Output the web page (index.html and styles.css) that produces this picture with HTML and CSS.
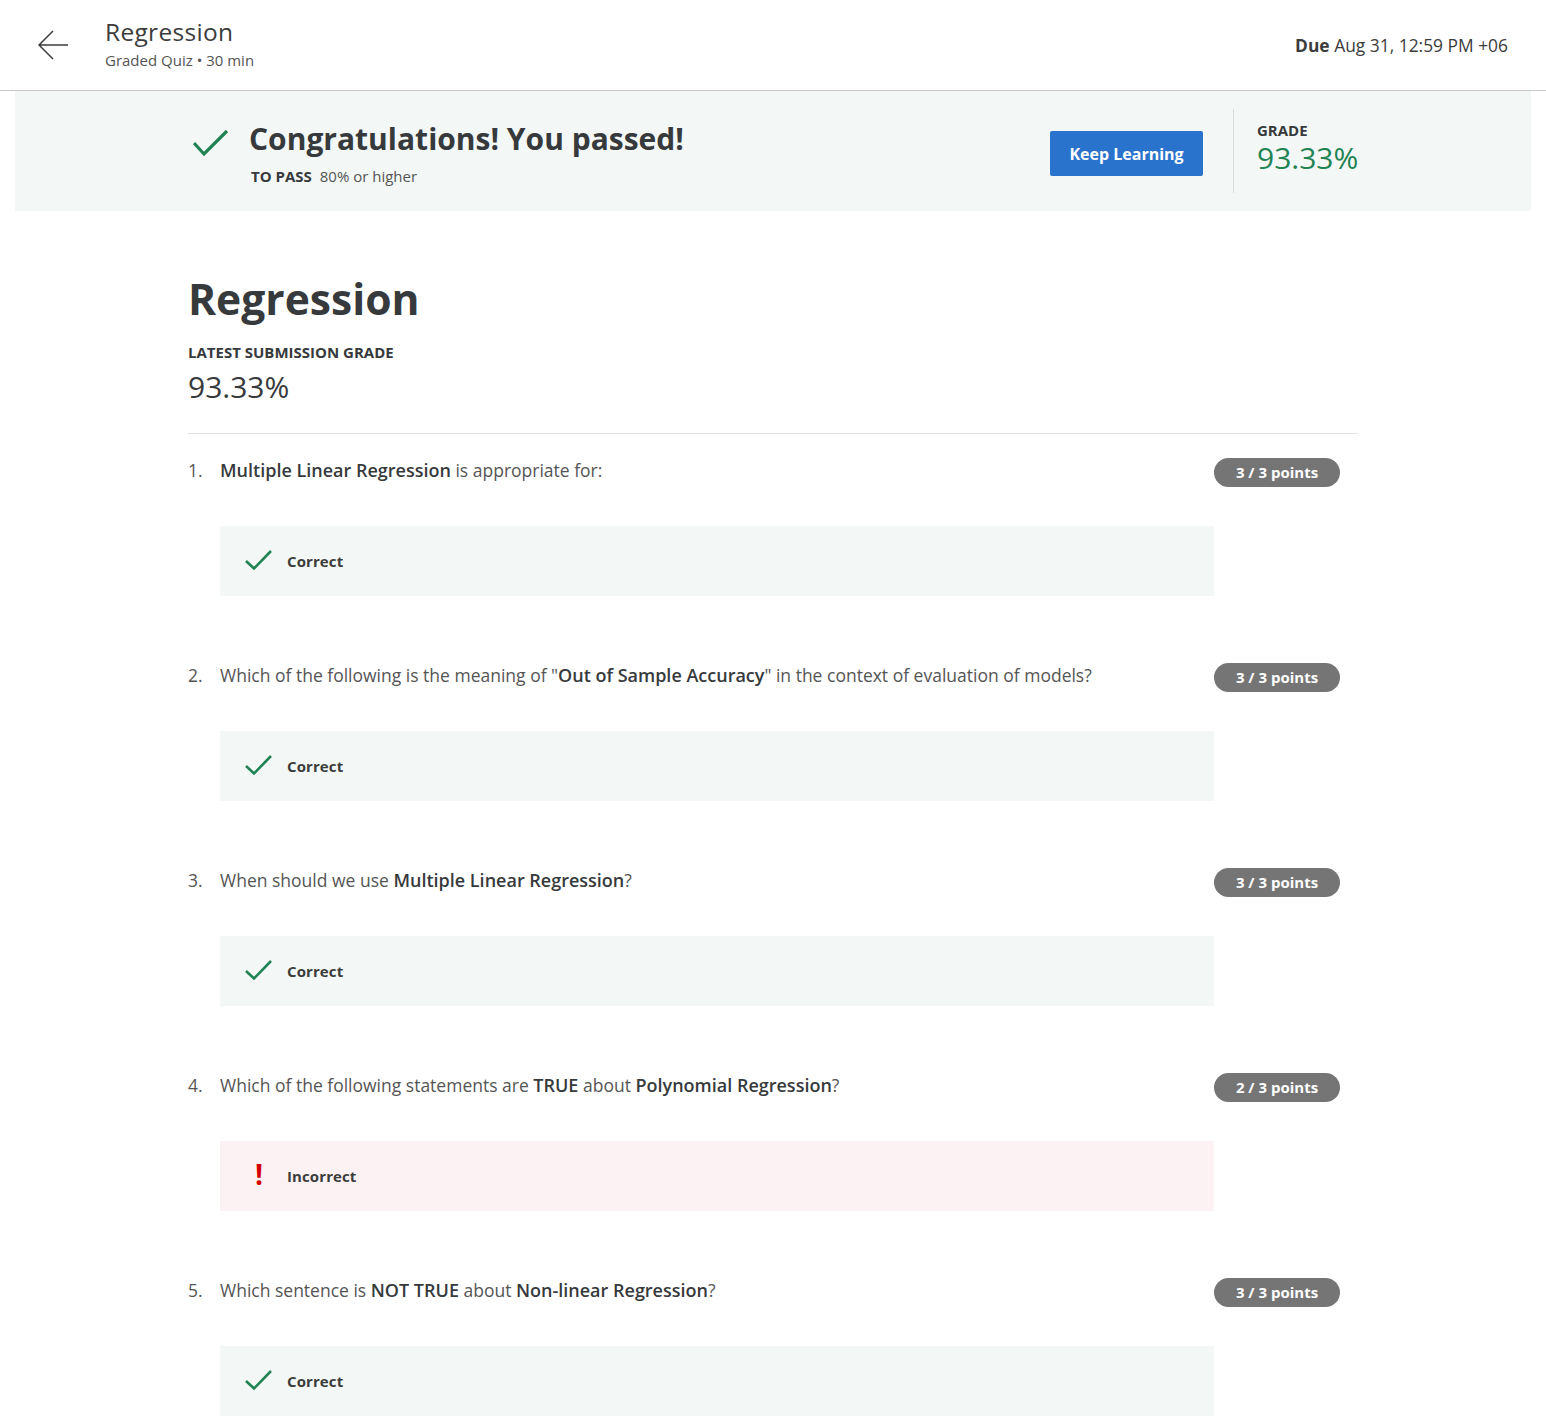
FILE: index.html
```html
<!DOCTYPE html>
<html>
<head>
<meta charset="utf-8">
<link rel="stylesheet" href="styles.css">
</head>
<body>
<header class="topbar">
  <div class="topbar-left">
    <svg class="back" width="30" height="30" viewBox="0 0 30 30"><path d="M15 1 L1 15 L15 29 M1 15 L30 15" fill="none" stroke="#3c3c3c" stroke-width="1.5"/></svg>
    <div class="titles">
      <div class="title">Regression</div>
      <div class="subtitle">Graded Quiz • 30 min</div>
    </div>
  </div>
  <div class="due"><b>Due</b> Aug 31, 12:59 PM +06</div>
</header>

<section class="banner">
  <div class="banner-inner">
    <div class="pass">
      <svg class="pass-check" width="36" height="30" viewBox="0 0 36 30"><path d="M1 14 L11 25 L34 2" fill="none" stroke="#1f8354" stroke-width="3.2"/></svg>
      <div class="pass-text">
        <div class="pass-title">Congratulations! You passed!</div>
        <div class="pass-sub"><b>TO PASS</b> 80% or higher</div>
      </div>
    </div>
    <div class="banner-right">
      <button class="keep">Keep Learning</button>
      <div class="grade">
        <div class="grade-label">GRADE</div>
        <div class="grade-value">93.33%</div>
      </div>
    </div>
  </div>
</section>

<main class="content">
  <h1 class="heading">Regression</h1>
  <div class="latest-label">LATEST SUBMISSION GRADE</div>
  <div class="latest-value">93.33%</div>
  <hr class="divider">

  <div class="question">
    <div class="q-row">
      <div class="q-num">1.</div>
      <div class="q-text"><b>Multiple Linear Regression</b> is appropriate for:</div>
      <div class="badge">3 / 3 points</div>
    </div>
    <div class="answer correct">
      <svg class="ans-check" width="28" height="22" viewBox="0 0 28 22"><path d="M1 12 L9 19.5 L26 2" fill="none" stroke="#1f8354" stroke-width="2.6"/></svg>
      <span>Correct</span>
    </div>
  </div>

  <div class="question">
    <div class="q-row">
      <div class="q-num">2.</div>
      <div class="q-text">Which of the following is the meaning of "<b>Out of Sample Accuracy</b>" in the context of evaluation of models?</div>
      <div class="badge">3 / 3 points</div>
    </div>
    <div class="answer correct">
      <svg class="ans-check" width="28" height="22" viewBox="0 0 28 22"><path d="M1 12 L9 19.5 L26 2" fill="none" stroke="#1f8354" stroke-width="2.6"/></svg>
      <span>Correct</span>
    </div>
  </div>

  <div class="question">
    <div class="q-row">
      <div class="q-num">3.</div>
      <div class="q-text">When should we use <b>Multiple Linear Regression</b>?</div>
      <div class="badge">3 / 3 points</div>
    </div>
    <div class="answer correct">
      <svg class="ans-check" width="28" height="22" viewBox="0 0 28 22"><path d="M1 12 L9 19.5 L26 2" fill="none" stroke="#1f8354" stroke-width="2.6"/></svg>
      <span>Correct</span>
    </div>
  </div>

  <div class="question">
    <div class="q-row">
      <div class="q-num">4.</div>
      <div class="q-text">Which of the following statements are <b>TRUE</b> about <b>Polynomial Regression</b>?</div>
      <div class="badge">2 / 3 points</div>
    </div>
    <div class="answer incorrect">
      <span class="excl">!</span>
      <span>Incorrect</span>
    </div>
  </div>

  <div class="question">
    <div class="q-row">
      <div class="q-num">5.</div>
      <div class="q-text">Which sentence is <b>NOT TRUE</b> about <b>Non-linear Regression</b>?</div>
      <div class="badge">3 / 3 points</div>
    </div>
    <div class="answer correct">
      <svg class="ans-check" width="28" height="22" viewBox="0 0 28 22"><path d="M1 12 L9 19.5 L26 2" fill="none" stroke="#1f8354" stroke-width="2.6"/></svg>
      <span>Correct</span>
    </div>
  </div>
</main>
</body>
</html>
```

FILE: styles.css
```css
* { box-sizing: border-box; }
html, body { margin: 0; padding: 0; background: #fff; }
body {
  font-family: "Open Sans", "Liberation Sans", sans-serif;
  color: #373a3c;
}

.topbar {
  height: 91px;
  border-bottom: 1px solid #c8c8c8;
  display: flex;
  align-items: center;
  justify-content: space-between;
  padding: 0 38px 0 38px;
}
.topbar-left { display: flex; align-items: center; }
.back { display: block; margin-right: 37px; }
.titles { display: flex; flex-direction: column; margin-top: -3px; }
.title { font-size: 24.5px; line-height: 30px; color: #3c3c3c; letter-spacing: 0.3px; }
.subtitle { font-size: 15px; line-height: 20px; color: #555; margin-top: 3px; }
.due { font-size: 17.4px; color: #3c3c3c; }
.due b { font-weight: 700; }

.banner {
  margin: 0 15px;
  height: 120px;
  background: #f3f8f6;
}
.banner-inner {
  width: 1170px;
  margin: 0 auto;
  height: 100%;
  display: flex;
  align-items: center;
  justify-content: space-between;
}
.pass { display: flex; align-items: flex-start; padding-left: 5px; padding-top: 4px; }
.pass-check { margin-top: 9px; margin-right: 20px; }
.pass-text { display: flex; flex-direction: column; }
.pass-title { font-size: 30px; line-height: 38px; font-weight: 700; color: #373a3c; }
.pass-sub { font-size: 15px; line-height: 20px; margin-top: 8px; margin-left: 2px; color: #555; }
.pass-sub b { color: #373a3c; margin-right: 4px; }

.banner-right { display: flex; align-items: center; height: 100%; padding: 18px 0; }
.keep {
  width: 153px;
  height: 45px;
  background: #2a73cc;
  color: #fff;
  border: none;
  border-radius: 2px;
  font-family: inherit;
  font-size: 16px;
  font-weight: 700;
  margin-right: 30px;
  margin-top: 5px;
}
.grade {
  border-left: 1px solid #dcdcdc;
  height: 100%;
  padding-left: 23px;
  width: 125px;
  display: flex;
  flex-direction: column;
  justify-content: center;
}
.grade-label { font-size: 15px; line-height: 20px; font-weight: 700; color: #373a3c; margin-top: -7px; }
.grade-value { font-size: 30px; line-height: 36px; color: #1f8354; }

.content {
  width: 1170px;
  margin: 0 auto;
  padding-top: 59px;
  padding-bottom: 40px;
}
.heading {
  margin: 0;
  font-size: 42.6px;
  line-height: 56px;
  font-weight: 700;
  color: #373a3c;
}
.latest-label { font-size: 15px; line-height: 20px; font-weight: 700; margin-top: 16px; color: #373a3c; }
.latest-value { font-size: 30px; line-height: 36px; margin-top: 7px; color: #373a3c; }
.divider { border: none; border-top: 1px solid #e1e1e1; margin: 28px 0 22px 0; }

.question { margin-bottom: 65px; }
.q-row { display: flex; align-items: flex-start; height: 30px; }
.q-num { width: 32px; font-size: 17.5px; line-height: 28px; color: #555; }
.q-text { flex: 1; font-size: 17.5px; line-height: 28px; color: #555; }
.q-text b { color: #373a3c; font-weight: 600; font-size: 18px; }
.badge {
  margin-top: 2px;
  width: 126px;
  height: 29px;
  border-radius: 15px;
  background: #757575;
  color: #fff;
  font-size: 15px;
  font-weight: 700;
  line-height: 29px;
  text-align: center;
  margin-right: 18px;
}
.answer {
  margin-top: 40px;
  margin-left: 32px;
  width: 994px;
  height: 70px;
  display: flex;
  align-items: center;
  padding-left: 25px;
  font-size: 15px;
  font-weight: 700;
  letter-spacing: 0.1px;
  color: #3c3c3c;
}
.answer.correct { background: #f3f8f6; }
.answer.incorrect { background: #fdf2f3; }
.ans-check { margin-right: 14px; margin-top: -2px; }
.excl {
  width: 28px;
  margin-right: 14px;
  text-align: center;
  color: #d30001;
  font-size: 28px;
  font-weight: 700;
  line-height: 28px;
  margin-top: -4px;
}
```
